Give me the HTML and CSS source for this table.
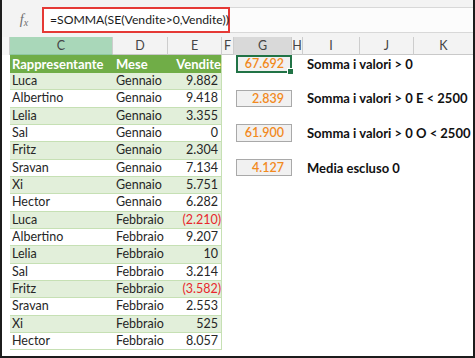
FILE: index.html
```html
<!DOCTYPE html>
<html lang="it">
<head>
<meta charset="utf-8">
<title>SOMMA SE Vendite</title>
<link rel="stylesheet" href="styles.css">
</head>
<body>
<div class="frame">
  <div class="formula-bar">
    <div class="fx"><i>f</i><span>x</span></div>
    <div class="input">
      <div class="formula">=SOMMA(SE(Vendite&gt;0,Vendite))</div>
    </div>
  </div>
  <div class="col-heads">
    <div class="ch rh"></div>
    <div class="ch sel-c">C</div>
    <div class="ch">D</div>
    <div class="ch">E</div>
    <div class="ch">F</div>
    <div class="ch sel-g">G</div>
    <div class="ch">H</div>
    <div class="ch">I</div>
    <div class="ch">J</div>
    <div class="ch last">K</div>
  </div>
  <div class="sheet">
    <div class="rowhead"></div>
    <div class="table">
      <div class="row head"><div class="c">Rappresentante</div><div class="d">Mese</div><div class="e">Vendite</div></div>
      <div class="row band"><div class="c">Luca</div><div class="d">Gennaio</div><div class="e">9.882</div></div>
      <div class="row"><div class="c">Albertino</div><div class="d">Gennaio</div><div class="e">9.418</div></div>
      <div class="row band"><div class="c">Lelia</div><div class="d">Gennaio</div><div class="e">3.355</div></div>
      <div class="row"><div class="c">Sal</div><div class="d">Gennaio</div><div class="e">0</div></div>
      <div class="row band"><div class="c">Fritz</div><div class="d">Gennaio</div><div class="e">2.304</div></div>
      <div class="row"><div class="c">Sravan</div><div class="d">Gennaio</div><div class="e">7.134</div></div>
      <div class="row band"><div class="c">Xi</div><div class="d">Gennaio</div><div class="e">5.751</div></div>
      <div class="row"><div class="c">Hector</div><div class="d">Gennaio</div><div class="e">6.282</div></div>
      <div class="row band"><div class="c">Luca</div><div class="d">Febbraio</div><div class="e neg">(2.210)</div></div>
      <div class="row"><div class="c">Albertino</div><div class="d">Febbraio</div><div class="e">9.207</div></div>
      <div class="row band"><div class="c">Lelia</div><div class="d">Febbraio</div><div class="e">10</div></div>
      <div class="row"><div class="c">Sal</div><div class="d">Febbraio</div><div class="e">3.214</div></div>
      <div class="row band"><div class="c">Fritz</div><div class="d">Febbraio</div><div class="e neg">(3.582)</div></div>
      <div class="row"><div class="c">Sravan</div><div class="d">Febbraio</div><div class="e">2.553</div></div>
      <div class="row band"><div class="c">Xi</div><div class="d">Febbraio</div><div class="e">525</div></div>
      <div class="row"><div class="c">Hector</div><div class="d">Febbraio</div><div class="e">8.057</div></div>
    </div>
    <div class="col-f"></div>
    <div class="results">
      <div class="result">
        <div class="box selected">67.692</div>
        <div class="label">Somma i valori &gt; 0</div>
      </div>
      <div class="result">
        <div class="box">2.839</div>
        <div class="label">Somma i valori &gt; 0 E &lt; 2500</div>
      </div>
      <div class="result">
        <div class="box">61.900</div>
        <div class="label">Somma i valori &gt; 0 O &lt; 2500</div>
      </div>
      <div class="result">
        <div class="box">4.127</div>
        <div class="label">Media escluso 0</div>
      </div>
    </div>
  </div>
</div>
</body>
</html>
```

FILE: styles.css
```css
* { box-sizing: border-box; }

html, body {
  margin: 0;
  padding: 0;
  background: #ffffff;
}

.frame {
  width: 475px;
  height: 358px;
  border-left: 2px solid #1c1c1c;
  border-right: 2px solid #1c1c1c;
  border-bottom: 2px solid #1c1c1c;
  overflow: hidden;
  font-family: Lato, "Open Sans", sans-serif;
  color: #262626;
  background: #ffffff;
}

/* Formula bar */
.formula-bar {
  display: flex;
  height: 37px;
  background: #f3f3f3;
  padding-top: 7px;
  padding-bottom: 4px;
}

.fx {
  width: 40px;
  display: flex;
  align-items: center;
  justify-content: center;
  color: #6e6e6e;
  font-family: "Liberation Serif", serif;
  padding-left: 4px;
}

.fx i {
  font-size: 14px;
}

.fx span {
  font-size: 10px;
  font-style: italic;
  margin-top: 4px;
}

.input {
  flex: 1;
  background: #fcfcfc;
  border-top: 1px solid #d8d8d8;
  border-bottom: 1px solid #d8d8d8;
  display: flex;
}

.formula {
  width: 188px;
  margin-top: -1px;
  margin-bottom: -1px;
  border: 2px solid #e53935;
  background: #ffffff;
  font-size: 12.2px;
  line-height: 22px;
  padding-left: 6px;
  color: #1a1a1a;
  white-space: nowrap;
}

/* Column headers */
.col-heads {
  display: grid;
  grid-template-columns: 8px 103px 55px 54px 12px 58px 11px 57px 54px 1fr;
  height: 18px;
  background: #f3f3f3;
  border-bottom: 1px solid #c9c9c9;
}

.ch {
  border-right: 1px solid #cdcdcd;
  font-size: 12.5px;
  color: #454545;
  text-align: center;
  line-height: 17px;
}

.ch.rh {
  background: #f6f6f6;
}

.ch.last {
  border-right: none;
}

.ch.sel-c {
  background: #a9d7b9;
  border-bottom: 1px solid #8fc7a2;
}

.ch.sel-g {
  background: #d9d9d9;
}

/* Sheet body */
.sheet {
  display: flex;
  align-items: flex-start;
}

.rowhead {
  width: 8px;
  flex: none;
}

.table {
  width: 212px;
  flex: none;
  border-right: 1px solid #c6e0b4;
}

.row {
  display: grid;
  grid-template-columns: 103px 55px 54px;
  height: 17.33px;
  border-bottom: 1px solid #c6e0b4;
  font-size: 12.5px;
  line-height: 16px;
  align-items: center;
}

.row.head {
  height: 18px;
  background: #70ad47;
  color: #ffffff;
  font-weight: 700;
  font-size: 13px;
  border-bottom: none;
}

.row.band {
  background: #e2efda;
}

.c {
  padding-left: 2px;
  white-space: nowrap;
}

.d {
  padding-left: 3px;
  white-space: nowrap;
}

.e {
  text-align: right;
  padding-right: 4px;
  white-space: nowrap;
}

.row.head .e {
  padding-right: 1px;
}

.e.neg {
  color: #e8272c;
  padding-right: 1px;
}

.col-f {
  width: 12px;
  flex: none;
}

/* Results */
.results {
  display: flex;
  flex-direction: column;
  gap: 17.33px;
}

.result {
  display: flex;
  align-items: center;
  height: 17.33px;
}

.box {
  position: relative;
  width: 56px;
  height: 17.33px;
  margin-left: 2px;
  border: 1px solid #a9a9a9;
  background: #f1f1f1;
  color: #f28a1e;
  font-size: 12.5px;
  font-weight: 600;
  line-height: 15px;
  text-align: right;
  padding-right: 7px;
}

.box.selected {
  height: 18px;
  border: 2px solid #217346;
  line-height: 14px;
  padding-right: 6px;
}

.box.selected::after {
  content: "";
  position: absolute;
  right: -4px;
  bottom: -4px;
  width: 5px;
  height: 5px;
  background: #217346;
  border: 1px solid #ffffff;
}

.label {
  padding-left: 15px;
  font-weight: 700;
  font-size: 13px;
  color: #111111;
  white-space: nowrap;
}
```
